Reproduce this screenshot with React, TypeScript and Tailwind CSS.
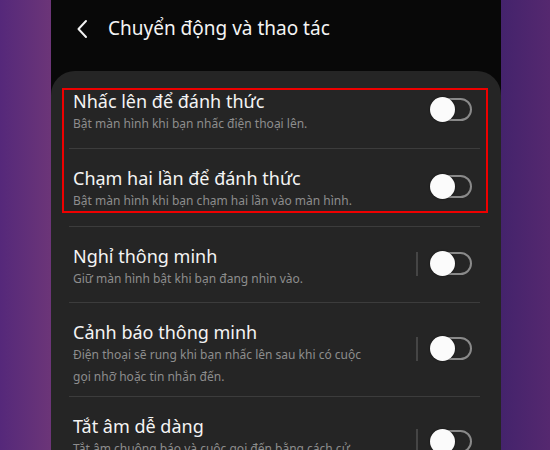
import React from "react";

type Item = {
  title: string;
  lines: string[];
  rowClass: string;
  divider?: boolean;
};

const items: Item[] = [
  {
    title: "Nhấc lên để đánh thức",
    lines: ["Bật màn hình khi bạn nhấc điện thoại lên."],
    rowClass: "h-[76px]",
  },
  {
    title: "Chạm hai lần để đánh thức",
    lines: ["Bật màn hình khi bạn chạm hai lần vào màn hình."],
    rowClass: "h-[77px]",
  },
  {
    title: "Nghỉ thông minh",
    lines: ["Giữ màn hình bật khi bạn đang nhìn vào."],
    rowClass: "h-[75px]",
    divider: true,
  },
  {
    title: "Cảnh báo thông minh",
    lines: [
      "Điện thoại sẽ rung khi bạn nhấc lên sau khi có cuộc",
      "gọi nhỡ hoặc tin nhắn đến.",
    ],
    rowClass: "h-[93px]",
    divider: true,
  },
  {
    title: "Tắt âm dễ dàng",
    lines: ["Tắt âm chuông báo và cuộc gọi đến bằng cách cử"],
    rowClass: "h-[90px]",
    divider: true,
  },
];

function Toggle() {
  return (
    <div className="relative mb-[2px] h-[25px] w-[42px] shrink-0">
      <div className="absolute right-0 top-[1px] h-[23px] w-[40px] rounded-full border-2 border-[#8a8a8a]" />
      <div className="absolute left-0 top-0 h-[25px] w-[25px] rounded-full bg-[#fbfbfb] shadow-[0_0_2px_rgba(0,0,0,0.6)]" />
    </div>
  );
}

function Row({ item }: { item: Item }) {
  return (
    <div className={`flex items-center pl-[22px] pr-[29px] ${item.rowClass}`}>
      <div className="flex h-full flex-1 flex-col pt-[18px]">
        <div className="text-[18px] leading-[22px] text-[#f4f4f4]">{item.title}</div>
        <div className="mt-[1px] text-[12px] leading-[22px] text-[#8d8d8d]">
          {item.lines.map((l) => (
            <div key={l}>{l}</div>
          ))}
        </div>
      </div>
      {item.divider && <div className="mb-[2px] mr-[12px] h-[24px] w-[2px] bg-[#454545]" />}
      <Toggle />
    </div>
  );
}

export default function App() {
  return (
    <div
      className="flex h-[450px] w-[550px] overflow-hidden"
      style={{ fontFamily: '"Noto Sans", "DejaVu Sans", sans-serif' }}
    >
      <div className="w-[51px] shrink-0 bg-gradient-to-r from-[#55287a] to-[#6c3578]" />

      <div className="flex w-[450px] shrink-0 flex-col bg-[#080808]">
        <div className="flex h-[71px] shrink-0 items-center pb-[14px]">
          <svg
            className="ml-[25px]"
            width="14"
            height="20"
            viewBox="0 0 14 20"
            fill="none"
            stroke="#f2f2f2"
            strokeWidth="2"
            strokeLinecap="round"
            strokeLinejoin="round"
          >
            <path d="M10 2 L2.5 10 L10 18" />
          </svg>
          <span className="ml-[18px] text-[19px] text-[#f4f4f4]">Chuyển động và thao tác</span>
        </div>

        <div className="relative flex-1 rounded-t-[24px] bg-[#252525] pt-[1px]">
          {items.map((item, i) => (
            <div key={item.title}>
              {i > 0 && <div className="ml-[18px] mr-[21px] h-[1px] bg-[#3c3c3c]" />}
              <Row item={item} />
            </div>
          ))}
          <div className="absolute left-[11px] top-[17px] h-[125px] w-[426px] border-2 border-[#ee0000]" />
        </div>
      </div>

      <div className="flex-1 bg-gradient-to-r from-[#44236c] to-[#55286f]" />
    </div>
  );
}
